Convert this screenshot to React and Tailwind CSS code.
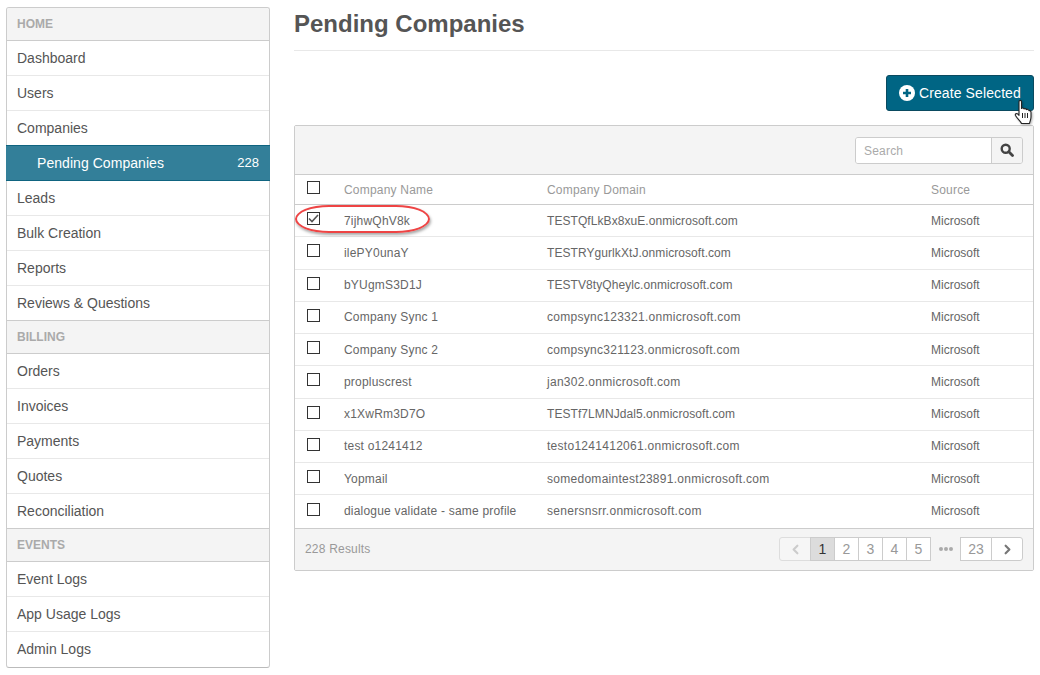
import { ChevronLeft, ChevronRight } from 'lucide-react'

const home = ['Dashboard', 'Users', 'Companies']
const home2 = ['Leads', 'Bulk Creation', 'Reports', 'Reviews & Questions']
const billing = ['Orders', 'Invoices', 'Payments', 'Quotes', 'Reconciliation']
const events = ['Event Logs', 'App Usage Logs', 'Admin Logs']

const companies = [
  ['7ijhwQhV8k', 'TESTQfLkBx8xuE.onmicrosoft.com'],
  ['ilePY0unaY', 'TESTRYgurlkXtJ.onmicrosoft.com'],
  ['bYUgmS3D1J', 'TESTV8tyQheylc.onmicrosoft.com'],
  ['Company Sync 1', 'compsync123321.onmicrosoft.com'],
  ['Company Sync 2', 'compsync321123.onmicrosoft.com'],
  ['propluscrest', 'jan302.onmicrosoft.com'],
  ['x1XwRm3D7O', 'TESTf7LMNJdal5.onmicrosoft.com'],
  ['test o1241412', 'testo1241412061.onmicrosoft.com'],
  ['Yopmail', 'somedomaintest23891.onmicrosoft.com'],
  ['dialogue validate - same profile', 'senersnsrr.onmicrosoft.com'],
]

function SectionHead({ label, first }) {
  return (
    <div className={`h-[33px] border-b border-[#ccc] bg-[#f4f4f4] pl-[10px] text-[12px] leading-[32px] font-bold text-[#aaa] ${first ? 'rounded-t-[2px]' : ''}`}>
      {label}
    </div>
  )
}

function NavItem({ label, border = 'border-[#e8e8e8]' }) {
  return (
    <div className={`h-[35px] border-b pl-[10px] text-[14px] leading-[34px] text-[#555] ${border}`}>
      {label}
    </div>
  )
}

function Checkbox({ checked }) {
  return (
    <div className="flex h-[13px] w-[13px] items-center justify-center border border-[#333] bg-white">
      {checked && (
        <svg width="11" height="11" viewBox="0 0 11 11" fill="none">
          <path d="M1 5.5 L4 8.5 L10 2" stroke="#555" strokeWidth="1.6" />
        </svg>
      )}
    </div>
  )
}

function PageBox({ children, active, className = '' }) {
  return (
    <div className={`flex h-[24px] items-center justify-center border border-[#ccc] text-[14px] ${active ? 'bg-[#dcdcdc] text-[#333]' : 'bg-white text-[#999]'} ${className}`}>
      {children}
    </div>
  )
}

export default function App() {
  return (
    <div className="relative flex h-[675px] w-[1040px] items-start overflow-hidden bg-white pt-[7px] pl-[6px] font-['Liberation_Sans',Arial,sans-serif]">
      {/* Sidebar */}
      <div className="w-[264px] shrink-0 rounded-[3px] border border-[#ccc] border-b-[#bbb] bg-white">
        <SectionHead label="HOME" first />
        {home.map((l, i) => <NavItem key={l} label={l} border={i === 2 ? 'border-transparent' : 'border-[#e8e8e8]'} />)}
        <div className="-mx-px -mt-px flex h-[36px] items-center justify-between border-y border-[#0f6480] bg-[#337f99] pr-[11px] pl-[31px] text-[14px] tracking-[0.05px] text-white">
          <span>Pending Companies</span>
          <span className="text-[13px]">228</span>
        </div>
        {home2.map((l, i) => <NavItem key={l} label={l} border={i === 3 ? 'border-[#ccc]' : 'border-[#e8e8e8]'} />)}
        <SectionHead label="BILLING" />
        {billing.map((l, i) => <NavItem key={l} label={l} border={i === 4 ? 'border-[#ccc]' : 'border-[#e8e8e8]'} />)}
        <SectionHead label="EVENTS" />
        {events.map((l, i) => <NavItem key={l} label={l} border={i === 2 ? 'border-transparent' : 'border-[#e8e8e8]'} />)}
      </div>

      {/* Main */}
      <div className="ml-[24px] w-[740px] shrink-0">
        <div className="h-[44px] border-b border-[#e8e8e8] text-[24px] leading-[34px] font-bold text-[#555]">
          Pending Companies
        </div>
        <div className="mt-[24px] flex justify-end">
          <button className="flex h-[36px] w-[148px] items-center gap-[4px] rounded-[3px] border border-[#0a4a60] bg-[#006584] pl-[12px] text-[14px] tracking-[0.1px] text-white">
            <span className="flex h-[16px] w-[16px] items-center justify-center rounded-full bg-white">
              <svg width="10" height="10" viewBox="0 0 10 10"><path d="M5 1v8M1 5h8" stroke="#006584" strokeWidth="2.6" /></svg>
            </span>
            Create Selected
          </button>
        </div>

        <div className="mt-[14px] overflow-hidden rounded-[2px] border border-[#ccc] bg-white">
          {/* Toolbar */}
          <div className="flex h-[49px] items-center justify-end border-b border-[#ccc] bg-[#f4f4f4] pr-[10px]">
            <div className="flex h-[27px] w-[168px] overflow-hidden rounded-[3px] border border-[#ccc]">
              <div className="flex-1 bg-white pl-[8px] text-[12px] leading-[26px] tracking-[0.2px] text-[#aaa]">Search</div>
              <div className="flex w-[31px] items-center justify-center border-l border-[#ccc] bg-[#f4f4f4]">
                <svg width="14" height="14" viewBox="0 0 14 14" fill="none">
                  <circle cx="5.7" cy="5.7" r="4" stroke="#444" strokeWidth="2.4" />
                  <path d="M8.800 8.800 L12.500 12.500" stroke="#444" strokeWidth="2.8" strokeLinecap="round" />
                </svg>
              </div>
            </div>
          </div>

          {/* Table head */}
          <div className="flex h-[30px] items-center border-b border-[#ccc] text-[12px] tracking-[0.2px] text-[#999]">
            <div className="w-[49px] pb-[5px] pl-[12px]"><Checkbox /></div>
            <div className="w-[203px]">Company Name</div>
            <div className="w-[384px]">Company Domain</div>
            <div>Source</div>
          </div>

          {/* Rows */}
          {companies.map((c, i) => (
            <div key={c[1]} className={`flex h-[32.25px] items-center text-[12px] tracking-[0.2px] text-[#666] ${i < 9 ? 'border-b border-[#e8e8e8]' : ''}`}>
              <div className="w-[49px] pb-[4px] pl-[12px]"><Checkbox checked={i === 0} /></div>
              <div className="w-[203px]">{c[0]}</div>
              <div className={`w-[384px] ${c[1].startsWith('TEST') ? 'tracking-[0.07px]' : 'tracking-[0.28px]'}`}>{c[1]}</div>
              <div className="tracking-normal">Microsoft</div>
            </div>
          ))}

          {/* Footer */}
          <div className="flex h-[42.5px] items-center justify-between border-t border-[#ccc] bg-[#f4f4f4] pr-[10px] pl-[10px]">
            <span className="text-[12px] tracking-[0.2px] text-[#999]">228 Results</span>
            <div className="flex items-center">
              <div className="flex h-[24px] w-[32px] items-center justify-center rounded-l-[3px] border border-[#ddd] bg-[#f6f6f6]">
                <ChevronLeft size={15} strokeWidth={3.5} className="text-[#ccc]" />
              </div>
              <PageBox active className="-ml-px w-[25px]">1</PageBox>
              <PageBox className="-ml-px w-[25px]">2</PageBox>
              <PageBox className="-ml-px w-[25px]">3</PageBox>
              <PageBox className="-ml-px w-[25px]">4</PageBox>
              <PageBox className="-ml-px w-[25px]">5</PageBox>
              <span className="flex w-[29px] justify-center gap-[1px]">
                <i className="h-[4px] w-[4px] rounded-full bg-[#aaa]" />
                <i className="h-[4px] w-[4px] rounded-full bg-[#aaa]" />
                <i className="h-[4px] w-[4px] rounded-full bg-[#aaa]" />
              </span>
              <PageBox className="w-[32px]">23</PageBox>
              <PageBox className="-ml-px w-[32px] rounded-r-[3px]"><ChevronRight size={15} strokeWidth={3.5} className="text-[#777]" /></PageBox>
            </div>
          </div>
        </div>
      </div>

      {/* Red annotation */}
      <div className="absolute top-[205px] left-[295px] h-[28px] w-[135px] rounded-[34px/14px] border-2 border-[#ee4444] shadow-[1px_2px_3px_rgba(0,0,0,0.35)]" />

      {/* Cursor */}
      <svg className="absolute top-[99px] left-[1014px] drop-shadow-[1px_1px_1px_rgba(0,0,0,0.3)]" width="20" height="26" viewBox="0 0 20 26">
        <path
          d="M5 2.500C5 1 7.500 1 7.500 2.500V9.500C8 8.700 9.800 8.800 10 10C10.500 9.300 12.200 9.500 12.400 10.600C13 10 14.800 10.300 15 11.700C15.800 11.400 17 12 17 13.500V18C17 20.500 16 22 15.500 24.500H7.500C6.500 22 3 19.500 1.500 16.500C.8 15 2.500 14 3.800 15L5 16.300Z"
          fill="#fff"
          stroke="#222"
          strokeWidth="1.100"
          strokeLinejoin="round"
        />
        <path d="M8.500 14v5M11 14v5M13.500 14v5" stroke="#222" strokeWidth="1" />
      </svg>
    </div>
  )
}
